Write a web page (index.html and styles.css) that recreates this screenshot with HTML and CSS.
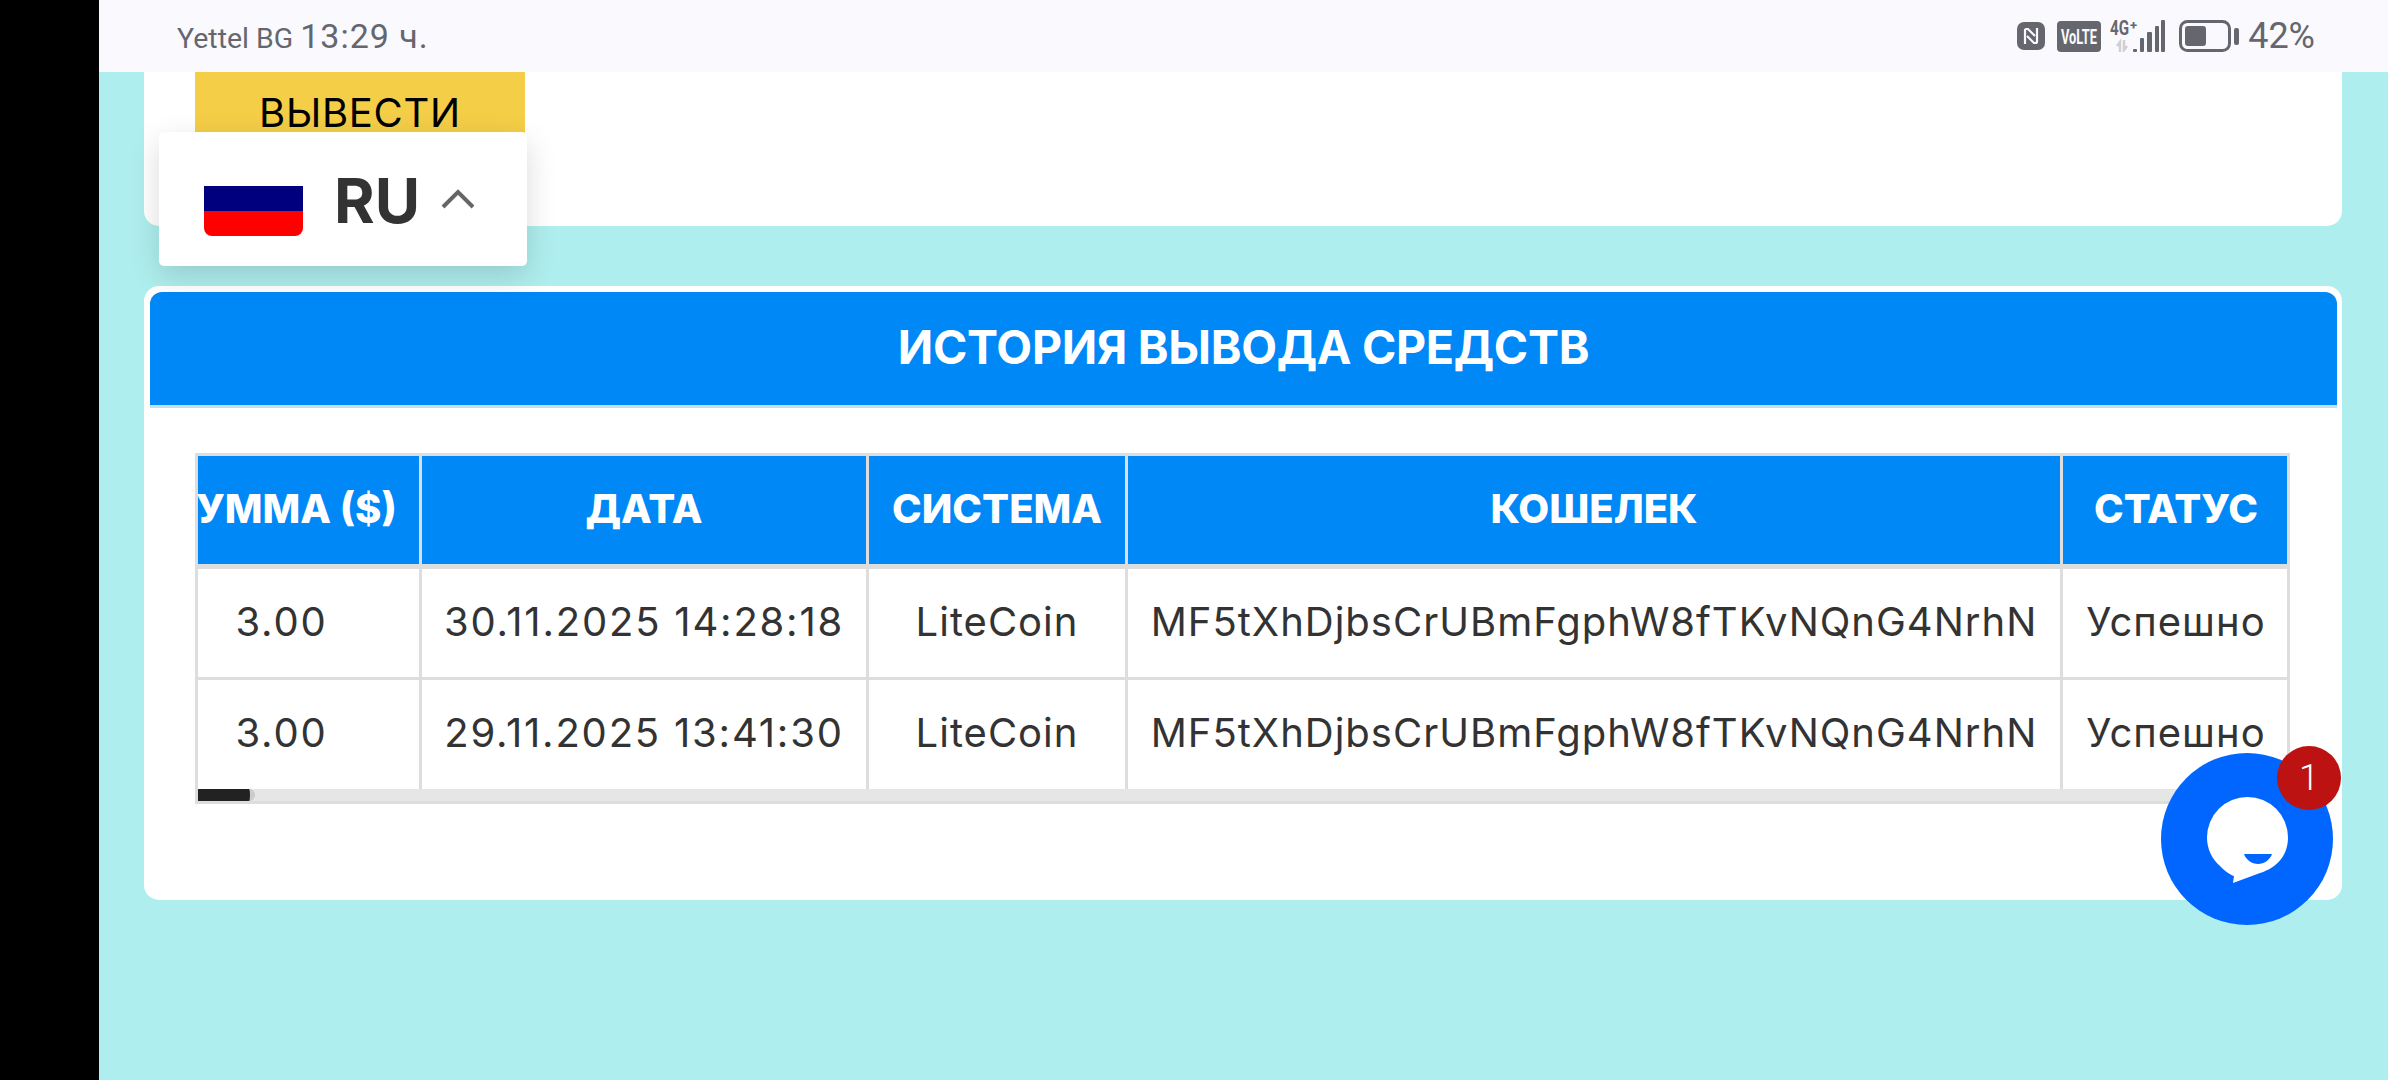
FILE: index.html
```html
<!DOCTYPE html>
<html lang="ru">
<head>
  <meta charset="UTF-8">
  <title>История вывода средств</title>
  <link rel="stylesheet" href="styles.css">
</head>
<body>
  <div class="side-bar"></div>

  <div class="screen">
    <!-- Строка состояния -->
    <div class="status-bar">
      <div class="status-left">
        <span class="carrier">Yettel BG</span>
        <span class="clock">13:29 ч.</span>
      </div>
      <div class="status-right">
        <svg class="nfc" width="28" height="28" viewBox="0 0 28 28">
          <rect width="28" height="28" rx="7" fill="#66666e"/>
          <path d="M8 22V8.500c0-.8.5-1.500 1.300-1.500H11l7 7" fill="none" stroke="#f9f9fe" stroke-width="2.200"/>
          <path d="M20 6v13.500c0 .8-.5 1.500-1.300 1.500H17l-7-7" fill="none" stroke="#f9f9fe" stroke-width="2.200"/>
        </svg>
        <svg class="volte" width="44" height="31" viewBox="0 0 44 31">
          <rect width="44" height="31" rx="4" fill="#66666e"/>
          <text x="4" y="23" textLength="36" lengthAdjust="spacingAndGlyphs" class="volte-label">VoLTE</text>
        </svg>
        <svg class="signal" width="56" height="32" viewBox="0 0 56 32">
          <text x="0" y="15" textLength="19" lengthAdjust="spacingAndGlyphs" class="net-label">4G</text>
          <text x="20" y="10" class="net-label-small">+</text>
          <path d="M10 32V22l-3 4M14 20v10l3-4" fill="none" stroke="#cfcfd4" stroke-width="2.500"/>
          <rect x="23" y="29" width="4" height="3" rx="1" fill="#66666e"/>
          <rect x="30" y="18" width="4" height="14" rx="1" fill="#66666e"/>
          <rect x="37" y="12" width="5" height="20" rx="1" fill="#66666e"/>
          <rect x="45" y="6" width="4" height="26" rx="1" fill="#66666e"/>
          <rect x="51" y="0" width="4" height="32" rx="1" fill="#66666e"/>
        </svg>
        <svg class="battery" width="60" height="32" viewBox="0 0 60 32">
          <rect x="1.500" y="1.500" width="49" height="29" rx="7" fill="none" stroke="#66666e" stroke-width="3"/>
          <rect x="6" y="6" width="21" height="20" rx="3" fill="#66666e"/>
          <rect x="55" y="8" width="5" height="17" rx="2" fill="#66666e"/>
        </svg>
        <span class="percent">42%</span>
      </div>
    </div>

    <div class="content">
      <div class="card card-top">
        <button class="withdraw-btn">ВЫВЕСТИ</button>
      </div>

      <div class="card card-history">
        <div class="history-title">ИСТОРИЯ ВЫВОДА СРЕДСТВ</div>
        <div class="table-box">
          <div class="table-scroll">
            <table class="history-table">
              <colgroup>
                <col class="col-sum">
                <col class="col-date">
                <col class="col-system">
                <col class="col-wallet">
                <col class="col-status">
              </colgroup>
              <thead>
                <tr>
                  <th>СУММА ($)</th>
                  <th>ДАТА</th>
                  <th>СИСТЕМА</th>
                  <th>КОШЕЛЕК</th>
                  <th>СТАТУС</th>
                </tr>
              </thead>
              <tbody>
                <tr>
                  <td class="cell-num">3.00</td>
                  <td class="cell-num">30.11.2025 14:28:18</td>
                  <td>LiteCoin</td>
                  <td>MF5tXhDjbsCrUBmFgphW8fTKvNQnG4NrhN</td>
                  <td>Успешно</td>
                </tr>
                <tr>
                  <td class="cell-num">3.00</td>
                  <td class="cell-num">29.11.2025 13:41:30</td>
                  <td>LiteCoin</td>
                  <td>MF5tXhDjbsCrUBmFgphW8fTKvNQnG4NrhN</td>
                  <td>Успешно</td>
                </tr>
              </tbody>
            </table>
          </div>
          <div class="scroll-track"><div class="scroll-thumb"></div></div>
        </div>
      </div>
    </div>

    <!-- Выбор языка -->
    <div class="lang-select">
      <div class="flag"><span class="flag-blue"></span><span class="flag-red"></span></div>
      <span class="lang-code">RU</span>
      <svg class="chevron" width="34" height="20" viewBox="0 0 34 20">
        <path d="M2 18L17 3l15 15" fill="none" stroke="#666" stroke-width="4"/>
      </svg>
    </div>

    <!-- Чат -->
    <div class="chat-btn">
      <svg width="172" height="172" viewBox="0 0 172 172">
        <path d="M86.500 44a40.500 40.500 0 0 1 40.500 40.500c0 17-10 30-28 35.500l-27 10 1-7c-2-.5-10-5-14-10-8-7-13-17-13-28.500A40.500 40.500 0 0 1 86.500 44z" fill="#fff"/>
        <path d="M83 101h28c-2 6-8 10-14 10s-12-4-14-10z" fill="#0066ff"/>
      </svg>
      <span class="chat-badge">1</span>
    </div>
  </div>
</body>
</html>
```

FILE: styles.css
```css
/* Общие стили */
html, body {
  margin: 0;
  height: 100%;
}

body {
  display: flex;
  background: #000;
  overflow: hidden;
  font-family: 'Inter', 'Liberation Sans', sans-serif;
  color: #333;
}

.side-bar {
  width: 99px;
  flex-shrink: 0;
}

.screen {
  position: relative;
  flex: 1;
  min-width: 0;
  background: #afeeee;
}

/* Строка состояния */
.status-bar {
  height: 72px;
  background: #f9f9fe;
  display: flex;
  justify-content: space-between;
  align-items: center;
  padding: 0 73px 0 78px;
  color: #66666e;
  font-family: 'Roboto', sans-serif;
}

.status-left {
  display: flex;
  align-items: baseline;
  gap: 7px;
}

.carrier {
  font-size: 28.500px;
}

.clock {
  font-size: 34px;
  letter-spacing: 1px;
}

.status-right {
  display: flex;
  align-items: center;
}

.volte {
  margin-left: 12px;
}

.volte-label {
  font: bold 21px 'Roboto', sans-serif;
  fill: #f9f9fe;
}

.signal {
  margin-left: 9px;
}

.net-label {
  font: bold 20px 'Roboto', sans-serif;
  fill: #66666e;
}

.net-label-small {
  font: bold 13px 'Roboto', sans-serif;
  fill: #66666e;
}

.battery {
  margin-left: 13px;
}

.percent {
  margin-left: 9px;
  font-size: 36px;
}

/* Карточки */
.content {
  padding: 0 46px 0 45px;
}

.card {
  background: #fff;
  box-sizing: border-box;
}

.card-top {
  height: 154px;
  padding-left: 51px;
  border-radius: 0 0 15px 15px;
}

.withdraw-btn {
  display: block;
  width: 330px;
  height: 80px;
  padding: 0;
  border: none;
  background: #f4ce47;
  color: #000;
  font-family: 'Inter', sans-serif;
  font-size: 40px;
  letter-spacing: 0.7px;
}

.card-history {
  height: 614px;
  margin-top: 60px;
  padding: 6px 5px 6px 6px;
  border-radius: 15px;
}

.history-title {
  height: 113px;
  border-bottom: 3px solid #c6dfed;
  border-radius: 12px 12px 0 0;
  background: #0088f7;
  color: #fff;
  font-size: 46.500px;
  font-weight: 700;
  letter-spacing: -0.3px;
  line-height: 110px;
  text-align: center;
}

/* Таблица */
.table-box {
  margin: 45px 47px 0 45px;
  border: 3px solid #ddd;
}

.table-scroll {
  overflow: hidden;
}

.history-table {
  width: 2145px;
  margin-left: -54px;
  table-layout: fixed;
  border-collapse: separate;
  border-spacing: 0;
}

.col-sum { width: 278px; }
.col-date { width: 447px; }
.col-system { width: 259px; }
.col-wallet { width: 935px; }
.col-status { width: 226px; }

.history-table th,
.history-table td {
  text-align: center;
  white-space: nowrap;
  border-right: 3px solid #ddd;
}

.history-table th:last-child,
.history-table td:last-child {
  border-right: none;
}

.history-table th {
  height: 113px;
  box-sizing: border-box;
  padding: 0 0 3px;
  background: #0088f7;
  color: #fff;
  font-size: 40px;
  font-weight: 800;
  border-bottom: 5px solid #ddd;
}

.history-table td {
  height: 111px;
  box-sizing: border-box;
  padding: 0 0 4px;
  font-size: 40px;
  letter-spacing: 1px;
  border-bottom: 3px solid #ddd;
}

.history-table td.cell-num {
  letter-spacing: 1.800px;
}

.history-table tr:last-child td {
  height: 109px;
  border-bottom: none;
}

.scroll-track {
  height: 12px;
  background: #e6e6e6;
}

.scroll-thumb {
  width: 52px;
  height: 12px;
  background: #222;
  border-right: 5px solid #ccc;
  border-radius: 0 6px 6px 0;
}

/* Выбор языка */
.lang-select {
  position: absolute;
  top: 132px;
  left: 60px;
  width: 368px;
  height: 134px;
  box-sizing: border-box;
  padding: 44px 0 0 45px;
  display: flex;
  background: #fff;
  border-radius: 5px;
  box-shadow: 0 10px 30px rgba(0, 0, 0, 0.15);
}

.flag {
  width: 99px;
  height: 50px;
  margin-top: 10px;
  border-radius: 0 0 8px 8px;
  overflow: hidden;
}

.flag-blue,
.flag-red {
  display: block;
  height: 25px;
}

.flag-blue { background: #00007f; }
.flag-red { background: #ff0000; }

.lang-code {
  margin: 2px 0 0 31px;
  font-size: 62px;
  font-weight: 700;
  line-height: 46px;
  color: #333;
}

.chevron {
  margin: 13px 0 0 21px;
}

/* Кнопка чата */
.chat-btn {
  position: absolute;
  top: 753px;
  left: 2062px;
  width: 172px;
  height: 172px;
  border-radius: 50%;
  background: #0066ff;
}

.chat-badge {
  position: absolute;
  top: -7px;
  left: 116px;
  width: 64px;
  height: 64px;
  border-radius: 50%;
  background: #bc1212;
  color: #fff;
  font: 300 36px/64px 'Roboto', sans-serif;
  text-align: center;
}
```
